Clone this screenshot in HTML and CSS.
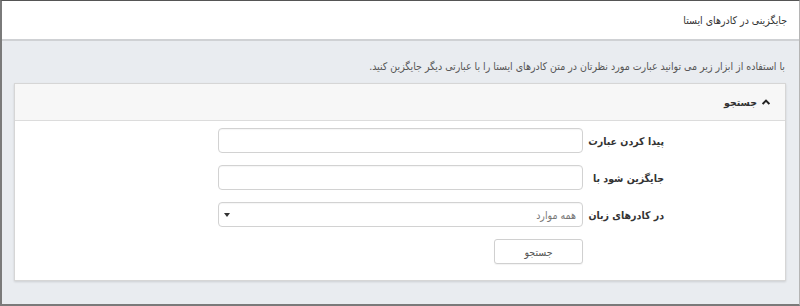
FILE: index.html
```html
<!DOCTYPE html>
<html lang="fa" dir="rtl">
<head>
<meta charset="utf-8">
<link rel="stylesheet" href="styles.css">
</head>
<body>
<div class="frame">
  <header class="topbar">
    <h1 class="title">جایگزینی در کادرهای ایستا</h1>
  </header>
  <main class="content">
    <p class="intro">با استفاده از ابزار زیر می توانید عبارت مورد نظرتان در متن کادرهای ایستا را با عبارتی دیگر جایگزین کنید.</p>
    <section class="panel">
      <div class="panel-head">
        <svg class="chev" width="8" height="6" viewBox="0 0 8 6"><path d="M0.6 5 L4 1.6 L7.4 5" fill="none" stroke="#222" stroke-width="2"/></svg>
        <span class="panel-title">جستجو</span>
      </div>
      <div class="panel-body">
        <div class="row">
          <label class="lbl">پیدا کردن عبارت</label>
          <input class="field" type="text">
        </div>
        <div class="row">
          <label class="lbl">جایگزین شود با</label>
          <input class="field" type="text">
        </div>
        <div class="row">
          <label class="lbl">در کادرهای زبان</label>
          <div class="select-wrap">
            <div class="field select">همه موارد</div>
            <span class="arrow"></span>
          </div>
        </div>
        <div class="row">
          <span class="lbl"></span>
          <button class="btn" type="button">جستجو</button>
        </div>
      </div>
    </section>
  </main>
</div>
</body>
</html>
```
FILE: styles.css
```css
* { box-sizing: border-box; }
html, body { margin: 0; padding: 0; }
body {
  font-family: "DejaVu Sans Condensed", "DejaVu Sans", sans-serif;
  font-size: 10.5px;
  color: #333;
  background: #fff;
}
.frame {
  width: 800px;
  height: 306px;
  border-top: 1px solid #555;
  border-left: 2px solid #7a7a7a;
  border-right: 1px solid #b5b5b5;
  border-bottom: 2px solid #7a7a7a;
  background: #e9ecf0;
  display: flex;
  flex-direction: column;
  overflow: hidden;
}
.topbar {
  height: 40px;
  background: #fff;
  border-bottom: 2px solid #cfd1d4;
  padding-right: 12px;
  display: flex;
  align-items: center;
}
.title {
  margin: 0;
  font-size: 10.5px;
  font-weight: normal;
  color: #333;
}
.content {
  padding: 0 13px 0 12px;
}
.intro {
  margin: 0;
  padding: 16px 1px 8px 0;
  line-height: 18px;
  color: #555;
  font-size: 10.5px;
}
.panel {
  background: #fff;
  border: 1px solid #d6d6d6;
  box-shadow: 0 1px 2px rgba(0,0,0,0.12);
}
.panel-head {
  height: 37px;
  background: #f7f7f7;
  border-bottom: 1px solid #dcdcdc;
  display: flex;
  align-items: center;
  padding-right: 15px;
  gap: 5px;
}
.chev { display: block; }
.panel-title {
  font-weight: bold;
  color: #333;
}
.panel-body {
  padding: 7px 121px 16px 0;
  display: flex;
  flex-direction: column;
  gap: 12px;
}
.row {
  display: flex;
  align-items: center;
  height: 25px;
}
.lbl {
  flex: 0 0 81px;
  width: 81px;
  font-weight: bold;
  color: #333;
  text-align: right;
  white-space: nowrap;
}
.field {
  width: 365px;
  height: 25px;
  border: 1px solid #d2d2d2;
  border-radius: 4px;
  background: #fff;
  box-shadow: inset 0 1px 1px rgba(0,0,0,0.04);
  font: inherit;
  margin: 0;
}
.select-wrap {
  position: relative;
  width: 365px;
  height: 25px;
}
.select {
  display: flex;
  align-items: center;
  padding-right: 6px;
  color: #777;
}
.arrow {
  position: absolute;
  left: 6px;
  top: 11px;
  width: 0;
  height: 0;
  border-left: 3px solid transparent;
  border-right: 3px solid transparent;
  border-top: 4px solid #333;
}
.btn {
  width: 89px;
  height: 25px;
  border: 1px solid #d0d0d0;
  border-radius: 3px;
  background: #fff;
  font: inherit;
  color: #555;
  margin: 0;
  padding: 0;
  box-shadow: 0 1px 1px rgba(0,0,0,0.05);
}
```
